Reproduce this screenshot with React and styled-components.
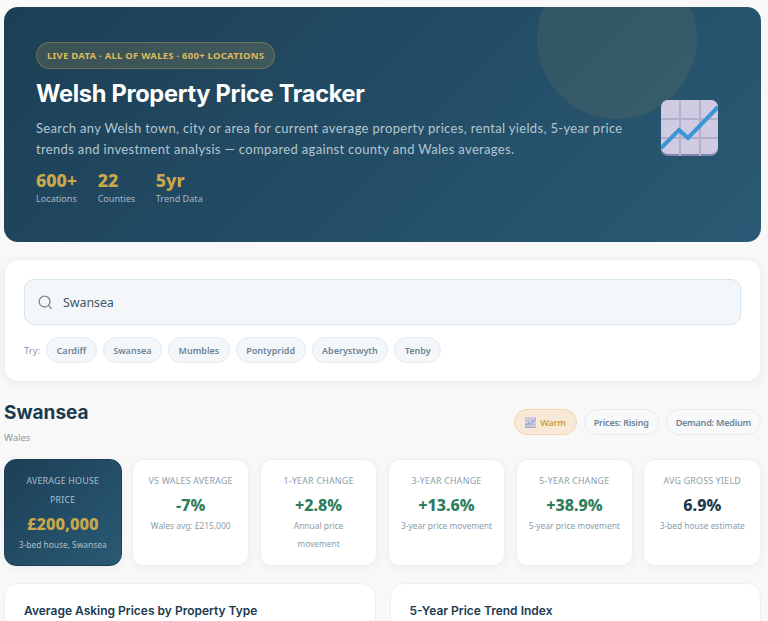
import React from "react";
import styled, { createGlobalStyle } from "styled-components";

const GlobalStyle = createGlobalStyle`
  html, body {
    margin: 0;
    padding: 0;
    height: 100%;
    overflow: hidden;
    background: #f8f8f9;
  }
  * { box-sizing: border-box; }
`;

const Page = styled.div`
  width: 768px;
  padding: 7px 7px 0 4px;
  font-family: "Noto Sans", "Open Sans", sans-serif;
  color: #1b3a4f;
`;

const Hero = styled.section`
  position: relative;
  overflow: hidden;
  height: 235px;
  padding: 35px 32px 0;
  border-radius: 14px;
  background: linear-gradient(135deg, #1c3f55 0%, #2a5a75 100%);
  display: flex;
  align-items: center;
  justify-content: space-between;
`;

const HeroCircle = styled.div`
  position: absolute;
  top: -48px;
  right: 64px;
  width: 160px;
  height: 160px;
  border-radius: 50%;
  background: rgba(201, 168, 76, 0.1);
`;

const HeroText = styled.div`
  position: relative;
  align-self: flex-start;
  width: 600px;
`;

const Badge = styled.div`
  display: inline-block;
  height: 27px;
  padding: 0 10px;
  line-height: 25px;
  border-radius: 14px;
  border: 1px solid rgba(201, 168, 76, 0.35);
  background: rgba(201, 168, 76, 0.18);
  color: #dcb95c;
  font-size: 9.5px;
  font-weight: 700;
  letter-spacing: 0.25px;
  white-space: nowrap;
`;

const Title = styled.h1`
  margin: 8px 0 0;
  font-family: Inter, sans-serif;
  font-size: 23.6px;
  line-height: 34px;
  font-weight: 700;
  letter-spacing: -0.3px;
  color: #ffffff;
`;

const Lead = styled.p`
  margin: 7px 0 0;
  font-family: Lato, sans-serif;
  font-size: 13px;
  line-height: 20.5px;
  letter-spacing: 0.34px;
  color: #b4c6d2;
`;

const HeroStats = styled.div`
  display: flex;
  gap: 20.5px;
  margin-top: 10px;
`;

const HeroStat = styled.div`
  display: flex;
  flex-direction: column;
`;

const HeroValue = styled.span`
  font-size: 17.8px;
  line-height: 23px;
  font-weight: 800;
  color: #c9a84c;
`;

const HeroLabel = styled.span`
  font-size: 9.1px;
  line-height: 14px;
  color: #a3b7c4;
`;

const ChartEmoji = ({ className }) => (
  <svg className={className} viewBox="0 0 57 56">
    <rect width="57" height="56" rx="7" fill="#8384ab" />
    <rect width="57" height="54" rx="7" fill="#d0cbe2" />
    <path d="M19 0V56M39 0V56M0 19H57M0 38H57" stroke="#b5b0c9" strokeWidth="2" fill="none" />
    <path d="M0 48L18 30L27 38L57 7" stroke="#3a96d6" strokeWidth="4" fill="none" />
  </svg>
);

const HeroIcon = styled(ChartEmoji)`
  position: relative;
  flex: none;
  width: 57px;
  height: 56px;
  margin: 0 11px 28px 0;
`;

const SmallEmoji = styled(ChartEmoji)`
  width: 11px;
  height: 11px;
`;

const SearchCard = styled.section`
  margin-top: 17px;
  height: 123px;
  padding: 19px;
  background: #ffffff;
  border: 1px solid #eef1f4;
  border-radius: 14px;
  box-shadow: 0 2px 10px rgba(27, 58, 79, 0.06);
`;

const SearchBox = styled.div`
  display: flex;
  align-items: center;
  gap: 10px;
  height: 46px;
  padding: 0 13px;
  background: #f4f7f9;
  border: 1.5px solid #d6e4ee;
  border-radius: 10px;
  font-size: 12.5px;
  letter-spacing: -0.1px;
  color: #3f5566;
`;

const TryRow = styled.div`
  display: flex;
  align-items: center;
  gap: 6px;
  margin-top: 12px;
`;

const TryLabel = styled.span`
  font-size: 9.5px;
  color: #8499a8;
`;

const Chip = styled.span`
  display: flex;
  align-items: center;
  height: 26px;
  padding: 0 9.5px;
  border-radius: 13px;
  background: #f4f7f9;
  border: 1px solid #e3eaf0;
  font-size: 9px;
  font-weight: 600;
  color: #6e8496;
`;

const ResultHeader = styled.div`
  display: flex;
  justify-content: space-between;
  align-items: center;
  margin-top: 18px;
  height: 44px;
`;

const Place = styled.h2`
  margin: 0;
  font-family: Inter, sans-serif;
  font-size: 19px;
  line-height: 24px;
  font-weight: 700;
  color: #1b3a4f;
`;

const Region = styled.div`
  margin-top: 7px;
  font-size: 9.5px;
  line-height: 12px;
  color: #8499a8;
`;

const Tags = styled.div`
  display: flex;
  gap: 7px;
`;

const Tag = styled.span`
  display: flex;
  align-items: center;
  gap: 4px;
  height: 26px;
  padding: 0 ${(p) => (p.$warm ? "10px" : "9px")};
  border-radius: 13px;
  font-size: 9px;
  font-weight: 600;
  letter-spacing: -0.2px;
  background: ${(p) => (p.$warm ? "#f8e9d6" : "#f8f9fb")};
  border: 1px solid ${(p) => (p.$warm ? "#f0d6ae" : "#e6ebf0")};
  color: ${(p) => (p.$warm ? "#c9a03f" : "#6e8496")};
`;

const StatsGrid = styled.div`
  display: grid;
  grid-template-columns: repeat(6, 1fr);
  gap: 10.4px;
  margin-top: 15px;
`;

const StatCard = styled.div`
  height: 107px;
  padding: 12px 12px 0;
  text-align: center;
  border-radius: 12px;
  background: ${(p) => (p.$dark ? "linear-gradient(135deg, #1c3f55, #2a5a75)" : "#ffffff")};
  border: 1px solid ${(p) => (p.$dark ? "#1c3f55" : "#eef1f4")};
  box-shadow: 0 2px 8px rgba(27, 58, 79, 0.05);
`;

const StatLabel = styled.div`
  font-size: 8.8px;
  line-height: 19px;
  letter-spacing: 0.25px;
  color: ${(p) => (p.$dark ? "#aebfcb" : "#8b9dab")};
`;

const StatValue = styled.div`
  font-size: ${(p) => (p.$dark ? "16.5px" : "16px")};
  line-height: 22px;
  margin-top: 3px;
  font-weight: 800;
  color: ${(p) => p.$color};
`;

const StatNote = styled.div`
  margin: 1px -4px 0;
  font-size: 8.4px;
  line-height: 18px;
  color: ${(p) => (p.$dark ? "#aebfcb" : "#8b9dab")};
`;

const Panels = styled.div`
  display: grid;
  grid-template-columns: 1fr 1fr;
  gap: 14px;
  margin-top: 17px;
`;

const Panel = styled.div`
  height: 200px;
  padding: 19px;
  background: #ffffff;
  border: 1px solid #eef1f4;
  border-radius: 14px;
`;

const PanelTitle = styled.h3`
  margin: 0;
  font-family: Inter, sans-serif;
  font-size: 12px;
  line-height: 16px;
  font-weight: 600;
  color: #1b3a4f;
`;

const stats = [
  { label: "AVERAGE HOUSE PRICE", value: "£200,000", note: "3-bed house, Swansea", color: "#c9a84c", dark: true },
  { label: "VS WALES AVERAGE", value: "-7%", note: "Wales avg: £215,000", color: "#2e7d5b" },
  { label: "1-YEAR CHANGE", value: "+2.8%", note: "Annual price movement", color: "#2e7d5b", narrow: true },
  { label: "3-YEAR CHANGE", value: "+13.6%", note: "3-year price movement", color: "#2e7d5b" },
  { label: "5-YEAR CHANGE", value: "+38.9%", note: "5-year price movement", color: "#2e7d5b" },
  { label: "AVG GROSS YIELD", value: "6.9%", note: "3-bed house estimate", color: "#1b3a4f" },
];

const App = () => {
  return (
    <Page>
      <GlobalStyle />
      <Hero>
        <HeroCircle />
        <HeroText>
          <Badge>LIVE DATA · ALL OF WALES · 600+ LOCATIONS</Badge>
          <Title>Welsh Property Price Tracker</Title>
          <Lead>
            Search any Welsh town, city or area for current average property prices, rental yields, 5-year price
            trends and investment analysis — compared against county and Wales averages.
          </Lead>
          <HeroStats>
            <HeroStat>
              <HeroValue>600+</HeroValue>
              <HeroLabel>Locations</HeroLabel>
            </HeroStat>
            <HeroStat>
              <HeroValue>22</HeroValue>
              <HeroLabel>Counties</HeroLabel>
            </HeroStat>
            <HeroStat>
              <HeroValue>5yr</HeroValue>
              <HeroLabel>Trend Data</HeroLabel>
            </HeroStat>
          </HeroStats>
        </HeroText>
        <HeroIcon />
      </Hero>

      <SearchCard>
        <SearchBox>
          <svg width="15" height="15" viewBox="0 0 16 16" fill="none" stroke="#6f8b9c" strokeWidth="1.4">
            <circle cx="7" cy="7" r="5.8" />
            <path d="M11.3 11.3L14.6 14.6" />
          </svg>
          Swansea
        </SearchBox>
        <TryRow>
          <TryLabel>Try:</TryLabel>
          {["Cardiff", "Swansea", "Mumbles", "Pontypridd", "Aberystwyth", "Tenby"].map((name) => (
            <Chip key={name}>{name}</Chip>
          ))}
        </TryRow>
      </SearchCard>

      <ResultHeader>
        <div>
          <Place>Swansea</Place>
          <Region>Wales</Region>
        </div>
        <Tags>
          <Tag $warm>
            <SmallEmoji />
            Warm
          </Tag>
          <Tag>Prices: Rising</Tag>
          <Tag>Demand: Medium</Tag>
        </Tags>
      </ResultHeader>

      <StatsGrid>
        {stats.map((s) => (
          <StatCard key={s.label} $dark={s.dark}>
            <StatLabel $dark={s.dark}>{s.label}</StatLabel>
            <StatValue $dark={s.dark} $color={s.color}>
              {s.value}
            </StatValue>
            <StatNote $dark={s.dark}>
              {s.narrow ? (
                <>
                  Annual price
                  <br />
                  movement
                </>
              ) : (
                s.note
              )}
            </StatNote>
          </StatCard>
        ))}
      </StatsGrid>

      <Panels>
        <Panel>
          <PanelTitle>Average Asking Prices by Property Type</PanelTitle>
        </Panel>
        <Panel>
          <PanelTitle>5-Year Price Trend Index</PanelTitle>
        </Panel>
      </Panels>
    </Page>
  );
};

export default App;
